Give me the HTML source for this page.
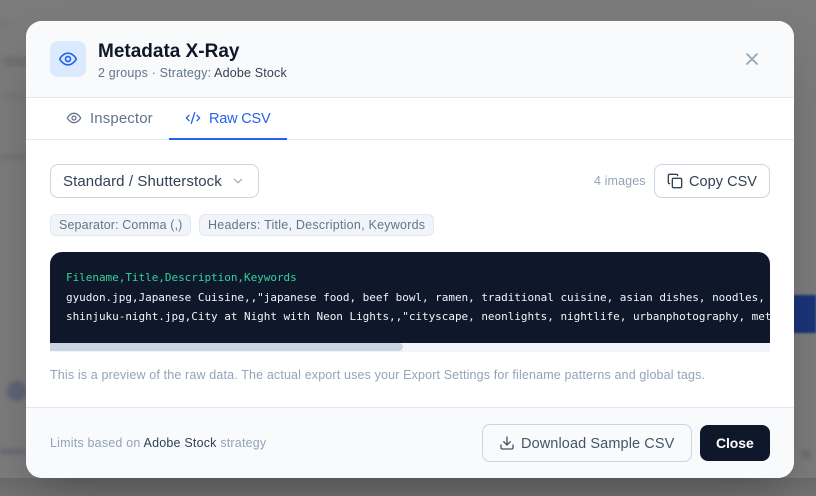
<!DOCTYPE html>
<html><head><meta charset="utf-8">
<style>
*{box-sizing:border-box;margin:0;padding:0}
html,body{width:816px;height:496px;overflow:hidden;background:#7b7b7c;font-family:"Liberation Sans",sans-serif}
.abs,.t{position:absolute}
.t{white-space:nowrap;line-height:1}
.blur{position:absolute;filter:blur(2px)}
#modal{position:absolute;left:26px;top:21px;width:768px;height:457px;background:#fff;border-radius:16px;overflow:hidden;box-shadow:0 25px 50px -12px rgba(0,0,0,.25)}
svg{position:absolute;fill:none;stroke-linecap:round;stroke-linejoin:round}
</style></head>
<body>
<div class="blur" style="left:5px;top:58px;width:22px;height:7px;background:#696a6d"></div>
<div class="blur" style="left:0;top:59px;width:26px;height:4px;background:#737476"></div>
<div class="blur" style="left:0;top:94px;width:26px;height:4px;background:#737475"></div>
<div class="blur" style="left:0;top:21px;width:10px;height:5px;background:#747576"></div>
<div class="blur" style="left:7px;top:381px;width:20px;height:20px;background:#5d6477;border-radius:50%"></div>
<div class="blur" style="left:0;top:449px;width:26px;height:5px;background:#676a72"></div>
<div class="blur" style="left:0;top:155px;width:26px;height:4px;background:#6f7072"></div>
<div class="blur" style="left:801px;top:450px;width:10px;height:9px;background:#6d6d6d;border-radius:50%"></div>
<div class="abs" style="left:790px;top:295px;width:26px;height:38px;background:#1a3478;filter:blur(1px)"></div>
<div class="abs" style="left:0;top:478px;width:816px;height:18px;background:linear-gradient(#6a6a6a,#727272)"></div>

<div id="modal">
  <div class="abs" style="left:0;top:0;width:768px;height:77px;background:#f8fafc;border-bottom:1px solid #e2e8f0"></div>
  <div class="abs" style="left:24px;top:20px;width:36px;height:36px;background:#dbeafe;border-radius:8px"></div>
  <svg style="left:32px;top:28px" width="20" height="20" viewBox="0 0 24 24" stroke="#2563eb" stroke-width="2"><path d="M2 12s3.600-7 10-7 10 7 10 7-3.600 7-10 7-10-7-10-7z"/><circle cx="12" cy="12" r="3"/></svg>
  <div class="t" style="left:72px;top:21px;font-size:19px;font-weight:700;color:#0f172a">Metadata X-Ray</div>
  <div class="t" style="left:72px;top:46px;font-size:12.5px;color:#64748b;letter-spacing:.17px">2 groups · Strategy: <span style="color:#334155">Adobe Stock</span></div>
  <svg style="left:716px;top:28px" width="20" height="20" viewBox="0 0 24 24" stroke="#94a3b8" stroke-width="2"><path d="M18 6L6 18M6 6l12 12"/></svg>

  <div class="abs" style="left:0;top:118px;width:768px;height:1px;background:#e2e8f0"></div>
  <svg style="left:40px;top:89px" width="16" height="16" viewBox="0 0 24 24" stroke="#64748b" stroke-width="2"><path d="M2 12s3.600-7 10-7 10 7 10 7-3.600 7-10 7-10-7-10-7z"/><circle cx="12" cy="12" r="3"/></svg>
  <div class="t" style="left:64px;top:90px;font-size:15px;color:#64748b;letter-spacing:.12px">Inspector</div>
  <svg style="left:159px;top:89px" width="16" height="16" viewBox="0 0 24 24" stroke="#2563eb" stroke-width="2"><path d="M18 16l4-4-4-4M6 8l-4 4 4 4M14.500 4l-5 16"/></svg>
  <div class="t" style="left:183px;top:91px;font-size:14.5px;color:#2563eb;letter-spacing:-.2px">Raw CSV</div>
  <div class="abs" style="left:143px;top:117px;width:118px;height:2px;background:#2563eb"></div>

  <div class="abs" style="left:24px;top:143px;width:209px;height:34px;border:1px solid #cbd5e1;border-radius:8px;background:#fff"></div>
  <div class="t" style="left:37px;top:153px;font-size:15px;color:#334155;letter-spacing:.09px">Standard / Shutterstock</div>
  <svg style="left:205px;top:153px" width="14" height="14" viewBox="0 0 24 24" stroke="#94a3b8" stroke-width="2"><path d="M6 9l6 6 6-6"/></svg>

  <div class="t" style="left:568px;top:154px;font-size:12.5px;color:#94a3b8;letter-spacing:.12px">4 images</div>
  <div class="abs" style="left:628px;top:143px;width:116px;height:34px;border:1px solid #cbd5e1;border-radius:8px;background:#fff"></div>
  <svg style="left:641px;top:152px" width="16" height="16" viewBox="0 0 24 24" stroke="#334155" stroke-width="2"><rect x="8" y="8" width="14" height="14" rx="2"/><path d="M4 16c-1.100 0-2-.9-2-2V4c0-1.100.9-2 2-2h10c1.100 0 2 .9 2 2"/></svg>
  <div class="t" style="left:663px;top:154px;font-size:14.5px;color:#334155;letter-spacing:.04px">Copy CSV</div>

  <div class="abs" style="left:24px;top:193px;width:141px;height:22px;background:#f1f5f9;border:1px solid #e2e8f0;border-radius:6px"></div>
  <div class="t" style="left:33px;top:198px;font-size:12.5px;color:#64748b;letter-spacing:.13px">Separator: Comma (,)</div>
  <div class="abs" style="left:173px;top:193px;width:235px;height:22px;background:#f1f5f9;border:1px solid #e2e8f0;border-radius:6px"></div>
  <div class="t" style="left:182px;top:198px;font-size:12.5px;color:#64748b;letter-spacing:.24px">Headers: Title, Description, Keywords</div>

  <div class="abs" style="left:24px;top:231px;width:720px;height:100px;background:#f1f5f9;border-radius:12px 12px 0 0;overflow:hidden">
    <div class="abs" style="left:0;top:0;width:720px;height:91px;background:#0f172a"></div>
    <div class="abs" style="left:0;top:91px;width:353px;height:8px;background:#cbd5e1;border-radius:0 4px 4px 0"></div>
    <div class="t" style="left:16px;top:20px;font:11px/1 'DejaVu Sans Mono',monospace;letter-spacing:-.03px;color:#34d399">Filename,Title,Description,Keywords</div>
    <div class="t" style="left:16px;top:40px;font:11px/1 'DejaVu Sans Mono',monospace;letter-spacing:-.03px;color:#f1f5f9">gyudon.jpg,Japanese Cuisine,,"japanese food, beef bowl, ramen, traditional cuisine, asian dishes, noodles, rice bowl</div>
    <div class="t" style="left:16px;top:59px;font:11px/1 'DejaVu Sans Mono',monospace;letter-spacing:-.03px;color:#f1f5f9">shinjuku-night.jpg,City at Night with Neon Lights,,"cityscape, neonlights, nightlife, urbanphotography, metropolis</div>
  </div>

  <div class="t" style="left:24px;top:348px;font-size:12.5px;color:#94a3b8;letter-spacing:.15px">This is a preview of the raw data. The actual export uses your Export Settings for filename patterns and global tags.</div>

  <div class="abs" style="left:0;top:386px;width:768px;height:71px;background:#f8fafc;border-top:1px solid #e2e8f0"></div>
  <div class="t" style="left:24px;top:416px;font-size:12.5px;color:#94a3b8;letter-spacing:.2px">Limits based on <span style="color:#334155">Adobe Stock</span> strategy</div>
  <div class="abs" style="left:456px;top:403px;width:210px;height:38px;border:1px solid #cbd5e1;border-radius:8px;background:#f8fafc"></div>
  <svg style="left:473px;top:414px" width="16" height="16" viewBox="0 0 24 24" stroke="#475569" stroke-width="2"><path d="M21 15v4a2 2 0 0 1-2 2H5a2 2 0 0 1-2-2v-4M7 10l5 5 5-5M12 15V3"/></svg>
  <div class="t" style="left:495px;top:416px;font-size:14.5px;color:#475569;letter-spacing:.1px">Download Sample CSV</div>
  <div class="abs" style="left:674px;top:404px;width:70px;height:36px;background:#0f172a;border-radius:8px"></div>
  <div class="t" style="left:690px;top:415px;font-size:14px;font-weight:700;color:#fff;letter-spacing:-.1px">Close</div>
</div>
</body></html>
